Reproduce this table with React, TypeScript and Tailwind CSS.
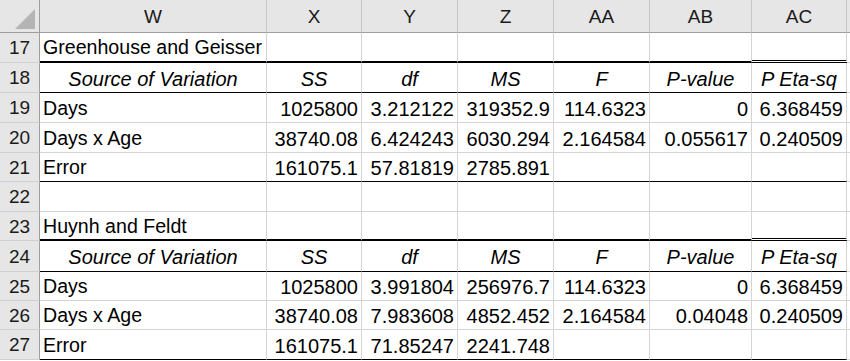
import clsx from "clsx";

type Align = "left" | "right" | "center";
type Edge = "grid" | "thin" | "thick";

type Row = {
  n: number;
  h: string;
  edge: Edge;
  head?: boolean; // italic header row
  cells: string[];
};

// column widths W..AC, written out for tailwind
const widths = ["w-[227px]", "w-[95px]", "w-[96px]", "w-[96px]", "w-[96px]", "w-[102px]", "w-[95px]"];
const letters = ["W", "X", "Y", "Z", "AA", "AB", "AC"];

const headers = ["Source of Variation", "SS", "df", "MS", "F", "P-value", "P Eta-sq"];

const rows: Row[] = [
  { n: 17, h: "h-[30px]", edge: "thick", cells: ["Greenhouse and Geisser", "", "", "", "", "", ""] },
  { n: 18, h: "h-[30px]", edge: "thin", head: true, cells: headers },
  { n: 19, h: "h-[30px]", edge: "grid", cells: ["Days", "1025800", "3.212122", "319352.9", "114.6323", "0", "6.368459"] },
  { n: 20, h: "h-[30px]", edge: "grid", cells: ["Days x Age", "38740.08", "6.424243", "6030.294", "2.164584", "0.055617", "0.240509"] },
  { n: 21, h: "h-[29px]", edge: "thin", cells: ["Error", "161075.1", "57.81819", "2785.891", "", "", ""] },
  { n: 22, h: "h-[30px]", edge: "grid", cells: ["", "", "", "", "", "", ""] },
  { n: 23, h: "h-[29px]", edge: "thick", cells: ["Huynh and Feldt", "", "", "", "", "", ""] },
  { n: 24, h: "h-[31px]", edge: "thin", head: true, cells: headers },
  { n: 25, h: "h-[29px]", edge: "grid", cells: ["Days", "1025800", "3.991804", "256976.7", "114.6323", "0", "6.368459"] },
  { n: 26, h: "h-[29px]", edge: "grid", cells: ["Days x Age", "38740.08", "7.983608", "4852.452", "2.164584", "0.04048", "0.240509"] },
  { n: 27, h: "h-[30px]", edge: "thin", cells: ["Error", "161075.1", "71.85247", "2241.748", "", "", ""] },
];

function edgeClass(edge: Edge, col: number) {
  if (edge === "thick") {
    // AC gets a double line on top of the header row
    return col === 6 ? "border-b-[3px] border-double border-b-black" : "border-b-2 border-b-black";
  }
  if (edge === "thin") return "border-b border-b-black";
  return "border-b border-b-[#d4d4d4]";
}

function Corner() {
  return (
    <div className="w-[40px] h-[33px] shrink-0 bg-[#e6e6e6] border-r border-b border-[#9e9e9e] relative">
      <svg className="absolute left-[15px] top-[9px]" width="20" height="20" viewBox="0 0 20 20">
        <polygon points="0,20 20,20 20,0" fill="#b4b4b4" />
      </svg>
    </div>
  );
}

export default function App() {
  return (
    <div
      className="w-[850px] h-[361px] overflow-hidden bg-white text-black"
      style={{ fontFamily: '"Liberation Sans", Arial, sans-serif' }}
    >
      {/* column letters */}
      <div className="flex">
        <Corner />
        {letters.map((l, i) => (
          <div
            key={l}
            className={clsx(
              widths[i],
              "h-[33px] shrink-0 bg-[#e6e6e6] border-b border-b-[#9e9e9e] border-r border-r-[#c6c6c6] flex items-center justify-center pt-[2px] text-[19px] text-[#1a1a1a]"
            )}
          >
            {l}
          </div>
        ))}
        <div className="flex-1 h-[33px] bg-[#e6e6e6] border-b border-b-[#9e9e9e]" />
      </div>

      {rows.map((r) => (
        <div key={r.n} className="flex">
          <div
            className={clsx(
              r.h,
              "w-[40px] shrink-0 bg-[#e6e6e6] border-r border-r-[#9e9e9e] border-b border-b-[#d0d0d0] flex items-center justify-center pt-[2px] text-[19px] text-[#1a1a1a]"
            )}
          >
            {r.n}
          </div>
          {r.cells.map((c, i) => {
            const align: Align = r.head ? "center" : i === 0 ? "left" : "right";
            return (
              <div
                key={i}
                className={clsx(
                  widths[i],
                  r.h,
                  "shrink-0 flex items-center pt-[2px] whitespace-nowrap border-r border-r-[#d4d4d4]",
                  edgeClass(r.edge, i),
                  align === "left" && "justify-start pl-[3px] text-[19.6px]",
                  align === "right" && "justify-end pr-[3px] text-[20px]",
                  align === "center" && "justify-center italic text-[20px]"
                )}
              >
                {c}
              </div>
            );
          })}
          <div className={clsx(r.h, "flex-1 border-b border-b-[#d4d4d4]")} />
        </div>
      ))}
    </div>
  );
}
